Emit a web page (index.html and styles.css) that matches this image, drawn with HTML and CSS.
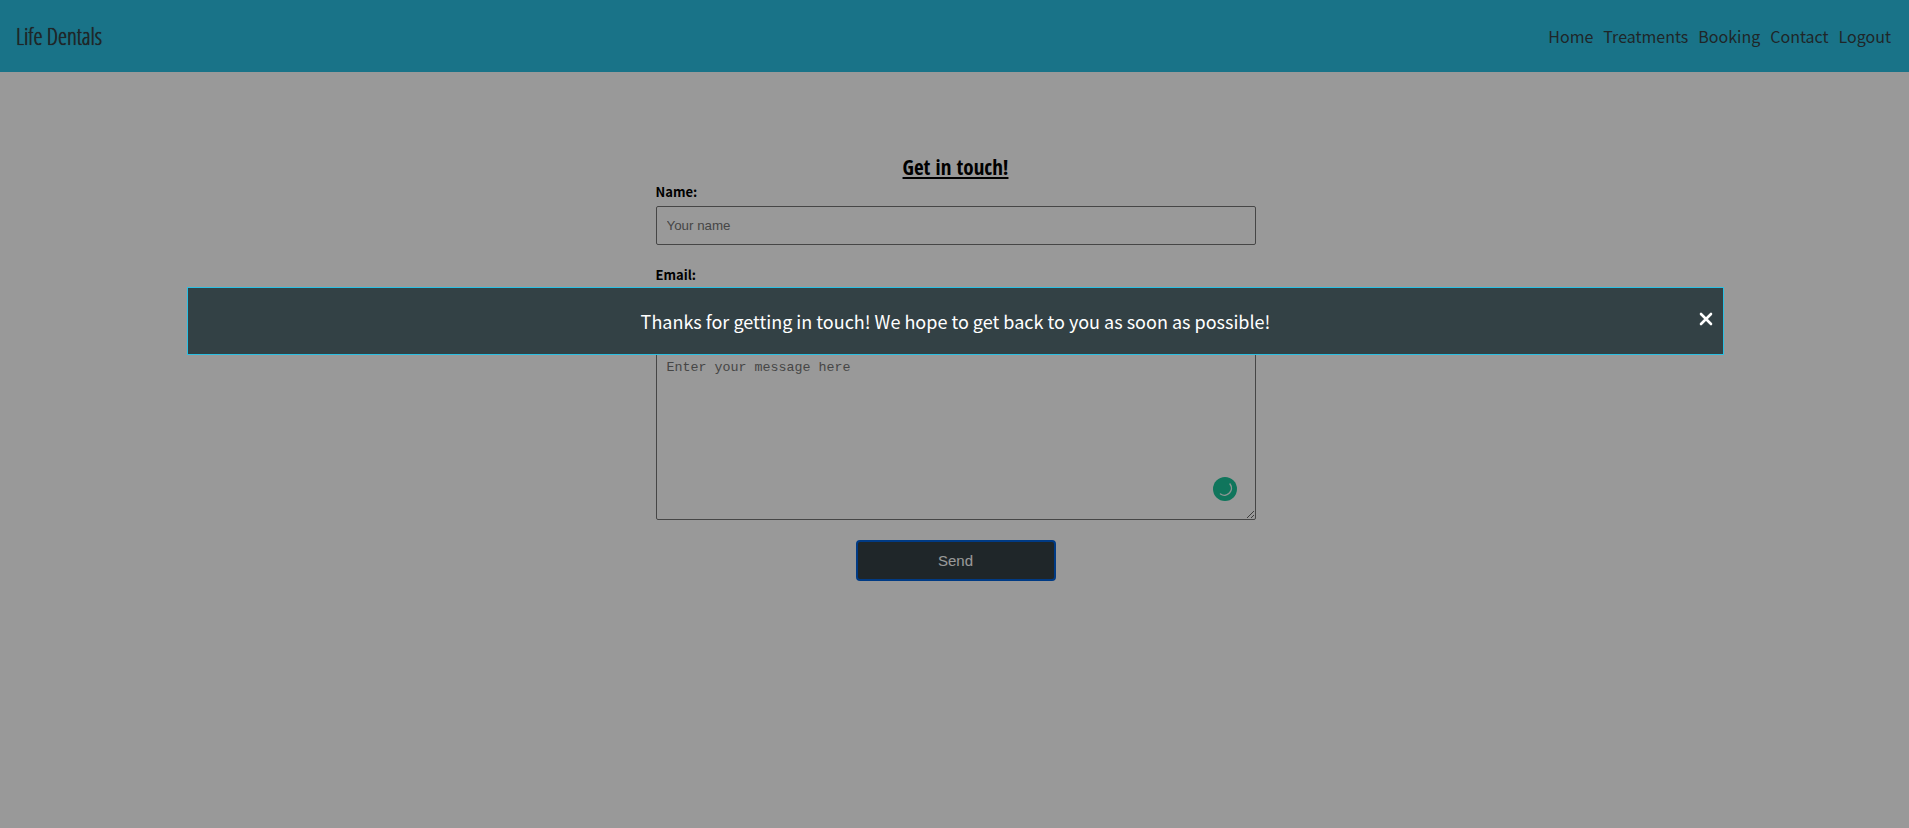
FILE: index.html
```
<!DOCTYPE html>
<html lang="en">
<head>
<meta charset="utf-8">
<meta name="viewport" content="width=device-width, initial-scale=1">
<title>Life Dentals</title>
<link rel="stylesheet" href="styles.css">
</head>
<body>
<header class="header">
  <a class="brand" href="#">Life Dentals</a>
  <nav class="nav">
    <a href="#">Home</a>
    <a href="#">Treatments</a>
    <a href="#">Booking</a>
    <a href="#">Contact</a>
    <a href="#">Logout</a>
  </nav>
</header>
<main class="main">
  <h1 class="title">Get in touch!</h1>
  <form class="form">
    <label class="label" for="name">Name:</label>
    <input class="field" id="name" type="text" placeholder="Your name">
    <label class="label" for="email">Email:</label>
    <input class="field" id="email" type="email">
    <div class="message">
      <textarea class="field area" id="message" aria-label="Message" placeholder="Enter your message here"></textarea>
      <svg class="checker" viewBox="0 0 24 24" aria-hidden="true">
        <circle cx="12" cy="12" r="12" fill="#1bc499"/>
        <path d="M17 7A7 7 0 0 1 7.5 17" fill="none" stroke="#fff" stroke-opacity="0.9" stroke-width="1.5" stroke-linecap="round"/>
      </svg>
    </div>
    <button class="send" type="button">Send</button>
  </form>
</main>
<div class="overlay">
  <div class="modal" role="dialog" aria-label="Message sent">
    <p class="modal-text">Thanks for getting in touch! We hope to get back to you as soon as possible!</p>
    <button class="close" type="button" aria-label="Close">
      <svg class="cross" viewBox="0 0 14 14" aria-hidden="true"><path d="M2 2L12 12M12 2L2 12" stroke="#fff" stroke-width="2.6" stroke-linecap="round"/></svg>
    </button>
  </div>
</div>
</body>
</html>
```

FILE: styles.css
```
* {
  box-sizing: border-box;
}

body {
  margin: 0;
  background: #fff;
  color: #000;
  font-family: "Noto Sans CJK SC", "Noto Sans", sans-serif;
}

.header {
  display: flex;
  align-items: center;
  justify-content: space-between;
  min-height: 72px;
  padding: 0 18px 0 16px;
  background: #2bc0e3;
}

.header a {
  color: #344045;
  text-decoration: none;
}

.header .brand {
  font-family: "Open Sans Condensed Light", "Open Sans Condensed", "Liberation Sans Narrow", sans-serif;
  font-weight: 300;
  font-size: 23px;
  text-shadow: 0 0 0 #344045, 0 0 1px #344045;
}

.nav {
  display: flex;
  gap: 10px;
  font-size: 16px;
}

.main {
  display: flex;
  flex-direction: column;
  align-items: center;
  padding: 80px 16px 40px 18px;
}

.title {
  margin: 0;
  font-family: "Open Sans Condensed", "Liberation Sans Narrow", sans-serif;
  font-size: 21px;
  line-height: 30px;
  text-decoration: underline;
}

.form {
  display: flex;
  flex-direction: column;
  width: 100%;
  max-width: 600px;
}

.label {
  font-size: 13px;
  font-weight: 700;
  line-height: 20px;
  margin-bottom: 4px;
}

.field {
  width: 100%;
  height: 39px;
  margin: 0 0 20px;
  padding: 10px;
  border: 1px solid #767676;
  border-radius: 2px;
  background: #fff;
  font-family: "Liberation Sans", Arial, sans-serif;
}

.field::placeholder {
  color: #757575;
}

.message {
  position: relative;
  display: flex;
  padding-top: 1px;
}

.area {
  height: 171px;
  resize: vertical;
  font-family: "Liberation Mono", "Courier New", monospace;
}

.checker {
  position: absolute;
  right: 19px;
  bottom: 39px;
  width: 24px;
  height: 24px;
}

.send {
  align-self: center;
  width: 200px;
  height: 41px;
  border: 2px solid #0061dc;
  border-radius: 4px;
  background: #344045;
  color: #fff;
  font-family: "Liberation Sans", Arial, sans-serif;
  font-size: 15px;
}

.overlay {
  position: fixed;
  inset: 0;
  padding: 287px 0 0 2px;
  background: rgba(0, 0, 0, 0.4);
}

.modal {
  display: flex;
  align-items: center;
  width: calc(80% + 11px);
  min-height: 68px;
  margin: 0 auto;
  padding: 0 10px;
  border: 1px solid #2bc0e3;
  background: #334145;
  color: #fff;
}

.modal-text {
  flex: 1;
  margin: 0 0 0 14px;
  font-size: 18px;
  text-align: center;
}

.close {
  display: flex;
  padding: 0;
  margin-bottom: 4px;
  border: 0;
  background: none;
}

.cross {
  width: 14px;
  height: 14px;
}
```
